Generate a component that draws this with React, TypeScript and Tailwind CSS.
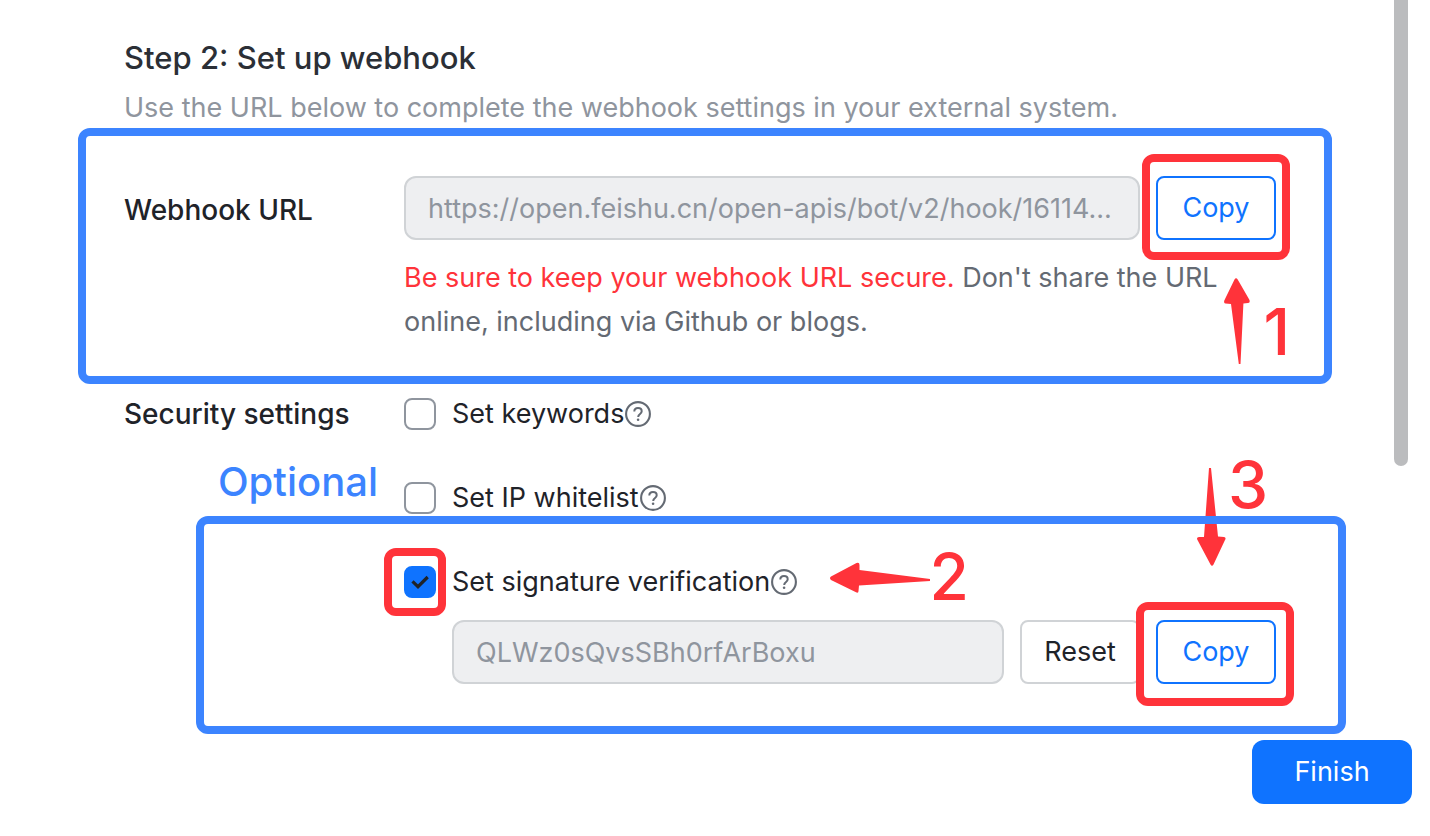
import { useState, type ReactNode } from "react";

function HelpIcon() {
  return (
    <svg viewBox="0 0 28 28" className="size-7 shrink-0" fill="none" aria-hidden="true">
      <circle cx="14" cy="14" r="11.9" stroke="#646a73" strokeWidth="2.1" />
      <path
        d="M10.3 11.6c0-2.2 1.5-3.5 3.7-3.5s3.7 1.3 3.7 3.2c0 1.5-.8 2.2-1.9 3-1.1.8-1.6 1.3-1.6 2.600"
        stroke="#646a73"
        strokeWidth="2"
      />
      <circle cx="14.1" cy="19.8" r="1.3" fill="#646a73" />
    </svg>
  );
}

function Option({
  label,
  checked,
  onChange,
  children,
}: {
  label: string;
  checked: boolean;
  onChange: (value: boolean) => void;
  children?: ReactNode;
}) {
  return (
    <div className="flex h-11 items-center">
      <label className="flex items-center gap-4">
        <span className="relative flex size-8 shrink-0">
          <input
            type="checkbox"
            checked={checked}
            onChange={(e) => onChange(e.target.checked)}
            className="size-8 appearance-none rounded-lg border-2 border-[#8f959e] bg-white checked:border-[#0f73ff] checked:bg-[#0f73ff]"
          />
          {checked && (
            <svg viewBox="0 0 32 32" className="pointer-events-none absolute inset-0 size-8" fill="none" aria-hidden="true">
              <path d="M8.5 15.3 14 20.7 23.7 11" stroke="#1f2329" strokeWidth="3.2" />
            </svg>
          )}
          {children}
        </span>
        <span className="text-[#1f2329]">{label}</span>
      </label>
      <button type="button" aria-label={`About: ${label}`} className="shrink-0">
        <HelpIcon />
      </button>
    </div>
  );
}

function CopyButton({ children }: { children: ReactNode }) {
  return (
    <div className="relative shrink-0">
      <button type="button" className="h-16 w-[120px] rounded-lg border-2 border-[#0f73ff] bg-white text-[#0f73ff]">
        Copy
      </button>
      {children}
    </div>
  );
}

const field = "h-16 min-w-0 flex-1 rounded-xl border-2 border-[#d0d3d6] bg-[#eeeff1] px-[22px] text-[#8f959e] outline-none";

export default function App() {
  const [keywords, setKeywords] = useState(false);
  const [whitelist, setWhitelist] = useState(false);
  const [signature, setSignature] = useState(true);

  return (
    <div className="relative min-h-screen overflow-hidden bg-white font-['Inter',sans-serif] text-[27px] leading-[44px]">
      <main className="pt-[34px] pr-[154px] pl-[124px]">
        <h1 className="text-[31px] leading-[48px] font-medium text-[#2b2f36]">Step 2: Set up webhook</h1>
        <p className="mt-1 text-[#8f959e]">Use the URL below to complete the webhook settings in your external system.</p>

        <section className="relative mt-[46px] flex">
          <label htmlFor="webhook-url" className="w-[280px] shrink-0 pt-3 text-[28px] font-medium text-[#1f2329]">
            Webhook URL
          </label>
          <div className="min-w-0 flex-1">
            <div className="flex gap-4">
              <input id="webhook-url" readOnly value="https://open.feishu.cn/open-apis/bot/v2/hook/16114..." className={field} />
              <CopyButton>
                <span className="pointer-events-none absolute -top-[22px] -right-3.5 -bottom-5 -left-3.5 rounded-xl border-8 border-[#ff333a]" />
              </CopyButton>
            </div>
            <p className="mt-4 text-[#646a73]">
              <span className="text-[#ff333a]">Be sure to keep your webhook URL secure.</span>{" "}
              <span>Don't share the URL online, including via Github or blogs.</span>
            </p>
          </div>
          <div className="pointer-events-none absolute -top-12 -right-14 -bottom-10 -left-[46px] rounded-xl border-8 border-[#3c84ff]" />
          <svg viewBox="0 0 28 88" className="pointer-events-none absolute top-[101px] right-[25px] h-[88px] w-7" fill="#ff333a" aria-hidden="true">
            <path d="M11.5 2.5Q13 0 14.7 2.5L26.5 23Q27.3 26 25 26L20.4 26.5 17.500 87H15.8L8 27 2.5 26.5Q.5 26 1.3 23.5Z" />
          </svg>
          <span className="pointer-events-none absolute top-[120px] -right-3.5 text-[64px] leading-[72px] font-medium text-[#ff333a]">1</span>
        </section>

        <section className="mt-12 flex">
          <div className="relative w-[280px] shrink-0">
            <h2 className="text-[28px] font-medium text-[#1f2329]">Security settings</h2>
            <span className="absolute top-[62px] right-[26px] text-[40px] leading-[56px] font-medium text-[#3c84ff]">Optional</span>
          </div>
          <div className="flex min-w-0 flex-1 flex-col gap-10">
            <Option label="Set keywords" checked={keywords} onChange={setKeywords} />
            <Option label="Set IP whitelist" checked={whitelist} onChange={setWhitelist} />
            <div className="relative">
              <Option label="Set signature verification" checked={signature} onChange={setSignature}>
                <span className="pointer-events-none absolute -top-[18px] -right-2.5 -bottom-[18px] -left-5 rounded-xl border-8 border-[#ff333a]" />
              </Option>
              <div className="mt-4 flex gap-4 pl-12">
                <input aria-label="Signature secret" readOnly value="QLWz0sQvsSBh0rfArBoxu" className={field} />
                <button type="button" className="h-16 w-[120px] shrink-0 rounded-lg border-2 border-[#d0d3d6] bg-white text-[#1f2329]">
                  Reset
                </button>
                <CopyButton>
                  <span className="pointer-events-none absolute -top-[18px] -right-[18px] -bottom-[22px] -left-5 rounded-xl border-8 border-[#ff333a]" />
                </CopyButton>
              </div>
              <svg viewBox="0 0 102 32" className="pointer-events-none absolute top-0.5 right-[345px] h-8 w-[102px]" fill="#ff333a" aria-hidden="true">
                <path d="M2 18Q0 16 2 14.5L27.5 1Q30.5 0 30.5 3V8L101 17V19L30 23.5 29.5 29Q29.5 32 26.5 30Z" />
              </svg>
              <span className="pointer-events-none absolute -top-[19px] right-[307px] text-[64px] leading-[72px] font-medium text-[#ff333a]">2</span>
              <svg viewBox="0 0 30 100" className="pointer-events-none absolute -top-[93px] right-[50px] h-[100px] w-[30px]" fill="#ff333a" aria-hidden="true">
                <path d="M13 1H15L22 69.5 28 70Q30.5 70.5 29 73L17.5 97.5Q16 100 14.5 97.5L1.5 73Q0 70.5 3 70L8 70Z" />
              </svg>
              <span className="pointer-events-none absolute -top-[111px] right-2 text-[64px] leading-[72px] font-medium text-[#ff333a]">3</span>
              <div className="pointer-events-none absolute -top-11 -right-[70px] -bottom-[50px] -left-[208px] rounded-xl border-8 border-[#3c84ff]" />
            </div>
          </div>
        </section>
      </main>

      <footer className="mt-14 flex justify-end pr-[18px] pb-8">
        <button type="button" className="h-16 w-40 rounded-xl bg-[#0f73ff] text-white">
          Finish
        </button>
      </footer>

      <div className="absolute top-0 right-[22px] h-[466px] w-3.5 rounded-b-full bg-[#bbbcbe]" />
    </div>
  );
}
